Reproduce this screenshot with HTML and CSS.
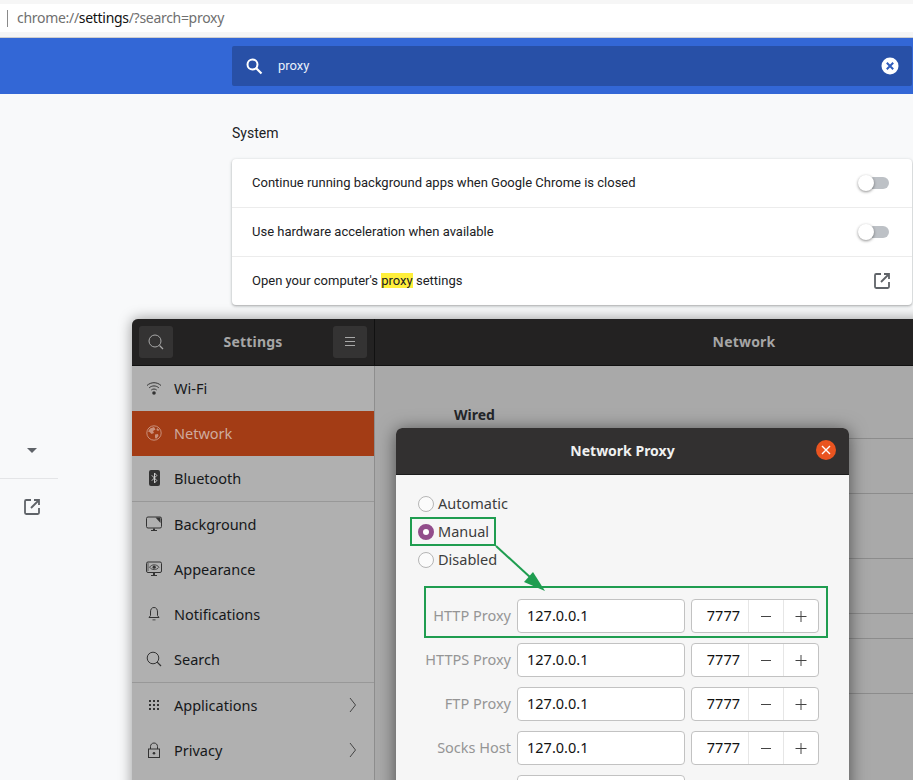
FILE: index.html
```html
<!DOCTYPE html>
<html lang="en">
<head>
<meta charset="utf-8">
<title>Proxy settings</title>
<link rel="stylesheet" href="styles.css">
</head>
<body>
<div class="browser">
  <div class="omnibox-wrap">
    <div class="omnibox"><span class="caret-line"></span><span class="url">chrome://<b>settings</b>/?search=proxy</span></div>
  </div>
  <header class="toolbar">
    <div class="searchbox">
      <svg class="search-ico" width="24" height="24" viewBox="0 0 24 24"><circle cx="10.5" cy="10.5" r="5" fill="none" stroke="#fff" stroke-width="2"/><path d="M14.2 14.2L19.5 19.5" stroke="#fff" stroke-width="2.2" fill="none"/></svg>
      <span class="query">proxy</span>
      <svg class="clear-ico" width="18" height="18" viewBox="0 0 18 18"><circle cx="9" cy="9" r="8.5" fill="#fff"/><path d="M5.8 5.8L12.2 12.2M12.2 5.8L5.8 12.2" stroke="#2f5cbc" stroke-width="2" fill="none"/></svg>
    </div>
  </header>
  <div class="page">
    <nav class="nav">
      <div class="nav-caret"><span class="tri"></span></div>
      <div class="nav-link">
        <svg width="18" height="18" viewBox="0 0 18 18"><path d="M8 2H3.2C2.5 2 2 2.5 2 3.2V14.800C2 15.500 2.500 16 3.200 16H14.800C15.500 16 16 15.500 16 14.800V10" fill="none" stroke="#5f6368" stroke-width="1.800"/><path d="M11 2H16V7M16 2L8 10" fill="none" stroke="#5f6368" stroke-width="1.800"/></svg>
      </div>
    </nav>
    <main class="main">
      <h2 class="section">System</h2>
      <section class="card">
        <div class="row"><span class="row-text">Continue running background apps when Google Chrome is closed</span><span class="toggle"></span></div>
        <div class="row"><span class="row-text">Use hardware acceleration when available</span><span class="toggle"></span></div>
        <div class="row"><span class="row-text">Open your computer's <mark>proxy</mark> settings</span>
          <svg class="ext" width="18" height="18" viewBox="0 0 18 18"><path d="M8 2H3.2C2.500 2 2 2.500 2 3.200V14.800C2 15.500 2.500 16 3.200 16H14.800C15.500 16 16 15.500 16 14.800V10" fill="none" stroke="#5f6368" stroke-width="1.800"/><path d="M11 2H16V7M16 2L8 10" fill="none" stroke="#5f6368" stroke-width="1.800"/></svg>
        </div>
      </section>
    </main>
  </div>
</div>

<div class="win">
  <div class="win-head">
    <div class="head-left">
      <button class="hbtn"><svg width="18" height="18" viewBox="0 0 18 18"><circle cx="8" cy="8" r="6" fill="none" stroke="#a8a8a8" stroke-width="1"/><path d="M12.500 12.500L16 16" stroke="#a8a8a8" stroke-width="1.200"/></svg></button>
      <span class="head-title">Settings</span>
      <button class="hbtn"><svg width="10" height="10" viewBox="0 0 10 10"><path d="M0 0.500H10M0 4.500H10M0 8.500H10" stroke="#a8a8a8" stroke-width="1"/></svg></button>
    </div>
    <div class="head-right"><span class="head-title">Network</span></div>
  </div>
  <div class="win-body">
    <ul class="side">
      <li class="item"><svg class="ic" width="16" height="16" viewBox="0 0 16 16"><path d="M1 5.500C5 1.800 11 1.800 15 5.500M3.200 7.800C6 5.300 10 5.300 12.800 7.800M5.300 10C6.900 8.700 9.100 8.700 10.700 10" fill="none" stroke="#333" stroke-width="1"/><circle cx="8" cy="13" r="1.800" fill="#333"/></svg>Wi-Fi</li>
      <li class="item active"><svg class="ic" width="16" height="16" viewBox="0 0 16 16"><circle cx="8" cy="8" r="7.200" fill="#a33c15" stroke="#c98f7a"/><path d="M4 3.500L8 2L9.500 4.500L7 6L8 8L5.500 9L3.500 7L2 6.500ZM9 9.500L12 9L12.500 11L10 14L9 12.500ZM11 3L13.500 5L12 6L10.500 5Z" fill="#c98f7a"/></svg>Network</li>
      <li class="item"><svg class="ic" width="16" height="16" viewBox="0 0 16 16"><rect x="3" y="0" width="11" height="16" rx="2" fill="#333"/><path d="M5.800 5.300L10.800 10.500L8.500 13V3L10.800 5.500L5.800 10.700" fill="none" stroke="#ccc" stroke-width="1"/></svg>Bluetooth</li>
      <li class="item sep"><svg class="ic" width="16" height="16" viewBox="0 0 16 16"><rect x="0.500" y="1" width="15" height="11" rx="1.500" fill="none" stroke="#333"/><path d="M9.500 1.500H14.500V7Z" fill="#333"/><path d="M5 15H11V14H9V12.500H7V14H5Z" fill="#333"/></svg>Background</li>
      <li class="item"><svg class="ic" width="16" height="16" viewBox="0 0 16 16"><rect x="0.500" y="1" width="15" height="10.500" rx="1.500" fill="none" stroke="#333"/><path d="M3.500 6.200C6 3 10.500 3 13 6.200C10.500 9.400 6 9.400 3.500 6.200Z" fill="none" stroke="#333" stroke-width=".8"/><circle cx="8.200" cy="6.200" r="1.600" fill="#333"/><path d="M1 3H3M1 5H3M1 7H3M1 9H3" stroke="#333" stroke-width=".7"/><path d="M5 15H11V14H9V12H7V14H5Z" fill="#333"/></svg>Appearance</li>
      <li class="item"><svg class="ic" width="16" height="16" viewBox="0 0 16 16"><path d="M8 1.500C5.500 1.500 4.500 3.500 4.500 6V9.500L3 11.500H13L11.500 9.500V6C11.500 3.500 10.500 1.500 8 1.500Z" fill="none" stroke="#333"/><path d="M6.500 13.500H9.500V14.300H6.500Z" fill="#333"/></svg>Notifications</li>
      <li class="item"><svg class="ic" width="16" height="16" viewBox="0 0 16 16"><circle cx="7" cy="7" r="5.800" fill="none" stroke="#333"/><path d="M11.200 11.200L15 15" stroke="#333" stroke-width="1.200"/></svg>Search</li>
      <li class="item sep"><svg class="ic" width="16" height="16" viewBox="0 0 16 16"><path d="M3 3h2v2h-2zM7 3h2v2h-2zM11 3h2v2h-2zM3 7h2v2h-2zM7 7h2v2h-2zM11 7h2v2h-2zM3 11h2v2h-2zM7 11h2v2h-2zM11 11h2v2h-2z" fill="#333"/></svg>Applications<svg class="chev" width="8" height="16" viewBox="0 0 8 16"><path d="M1 1L6.500 8L1 15" fill="none" stroke="#444"/></svg></li>
      <li class="item"><svg class="ic" width="16" height="16" viewBox="0 0 16 16"><path d="M4.500 7V4.500C4.500 2.500 6 1 8 1S11.500 2.500 11.500 4.500V7" fill="none" stroke="#333"/><rect x="2.500" y="7" width="11" height="8.500" fill="none" stroke="#333"/><circle cx="8" cy="11.200" r="1.300" fill="#333"/></svg>Privacy<svg class="chev" width="8" height="16" viewBox="0 0 8 16"><path d="M1 1L6.500 8L1 15" fill="none" stroke="#444"/></svg></li>
    </ul>
    <div class="content">
      <h3 class="wired">Wired</h3>
      <div class="lines">
        <div class="line h55"></div>
        <div class="line h65"></div>
        <div class="line h55"></div>
        <div class="line h25"></div>
        <div class="line h55"></div>
        <div class="line h55"></div>
      </div>
    </div>
  </div>
</div>

<div class="dialog">
  <div class="dlg-head">
    <span class="dlg-title">Network Proxy</span>
    <span class="dlg-close"><svg width="10" height="10" viewBox="0 0 10 10"><path d="M1 1L9 9M9 1L1 9" stroke="#fff" stroke-width="1.400"/></svg></span>
  </div>
  <div class="dlg-body">
    <div class="radios">
      <div class="radio"><span class="dot"></span><span class="radio-text">Automatic</span></div>
      <div class="radio"><span class="dot on"></span><span class="radio-text">Manual</span></div>
      <div class="radio"><span class="dot"></span><span class="radio-text">Disabled</span></div>
    </div>
    <div class="form">
      <div class="frow"><span class="lbl">HTTP Proxy</span><span class="entry">127.0.0.1</span><span class="spin"><span class="val">7777</span><span class="sbtn"><svg width="12" height="12" viewBox="0 0 12 12"><path d="M1 6.500H11" stroke="#444"/></svg></span><span class="sbtn"><svg width="12" height="12" viewBox="0 0 12 12"><path d="M0.500 6.500H11.500M6 1V12" stroke="#444"/></svg></span></span></div>
      <div class="frow"><span class="lbl">HTTPS Proxy</span><span class="entry">127.0.0.1</span><span class="spin"><span class="val">7777</span><span class="sbtn"><svg width="12" height="12" viewBox="0 0 12 12"><path d="M1 6.500H11" stroke="#444"/></svg></span><span class="sbtn"><svg width="12" height="12" viewBox="0 0 12 12"><path d="M0.500 6.500H11.500M6 1V12" stroke="#444"/></svg></span></span></div>
      <div class="frow"><span class="lbl">FTP Proxy</span><span class="entry">127.0.0.1</span><span class="spin"><span class="val">7777</span><span class="sbtn"><svg width="12" height="12" viewBox="0 0 12 12"><path d="M1 6.500H11" stroke="#444"/></svg></span><span class="sbtn"><svg width="12" height="12" viewBox="0 0 12 12"><path d="M0.500 6.500H11.500M6 1V12" stroke="#444"/></svg></span></span></div>
      <div class="frow"><span class="lbl">Socks Host</span><span class="entry">127.0.0.1</span><span class="spin"><span class="val">7777</span><span class="sbtn"><svg width="12" height="12" viewBox="0 0 12 12"><path d="M1 6.500H11" stroke="#444"/></svg></span><span class="sbtn"><svg width="12" height="12" viewBox="0 0 12 12"><path d="M0.500 6.500H11.500M6 1V12" stroke="#444"/></svg></span></span></div>
      <div class="frow"><span class="lbl"></span><span class="entry"></span></div>
    </div>
  </div>
</div>

<div class="mark-box mark-manual"></div>
<div class="mark-box mark-http"></div>
<svg class="mark-arrow" width="60" height="56" viewBox="0 0 60 56"><path d="M1 1L36 33" stroke="#1f9d50" stroke-width="2" fill="none"/><path d="M50 46L29 37L38 27Z" fill="#1f9d50"/></svg>
</body>
</html>
```
FILE: styles.css
```css
* { box-sizing: border-box; }
html, body { margin: 0; height: 780px; overflow: hidden; }
body { position: relative; background: #f8f9fa; font-family: "Roboto", sans-serif; }

.browser { display: flex; flex-direction: column; height: 780px; }
.omnibox-wrap { height: 38px; padding: 4px 0 5px; background: #f6f6f6; border-bottom: 1px solid #cfcfcf; }
.omnibox { height: 28px; background: #fff; display: flex; align-items: center; padding-left: 7px; }
.caret-line { width: 1px; height: 17px; background: #8a8a8a; margin-right: 9px; }
.url { margin-top: -2px; font: 14px "Noto Sans", sans-serif; color: #6f6f6f; letter-spacing: -0.3px; }
.url b { font-weight: 400; color: #111; }

.toolbar { height: 56px; background: #3367d6; padding: 8px 1px 8px 232px; }
.searchbox { height: 40px; background: #2850a7; border-radius: 2px; display: flex; align-items: center; padding: 0 13px 0 10px; }
.query { flex: 1; margin: -2px 0 0 12px; color: #e8effa; font-size: 13px; }

.page { flex: 1; display: flex; }
.nav { width: 232px; padding-top: 343px; flex: none; }
.nav-caret { width: 58px; height: 42px; border-bottom: 1px solid #e4e5e7; padding: 11px 0 0 27px; }
.tri { display: block; width: 0; height: 0; border: 5px solid transparent; border-top-color: #5f6368; border-bottom: 0; }
.nav-link { padding: 19px 0 0 23px; }
.main { flex: 1; padding-right: 1px; }
.section { margin: 0; padding-top: 30px; height: 65px; font-size: 14px; font-weight: 400; line-height: 18px; color: #202124; }
.card { background: #fff; border-radius: 4px; box-shadow: 0 1px 2px rgba(60,64,67,.3), 0 1px 3px 1px rgba(60,64,67,.12); }
.row { height: 49px; display: flex; align-items: center; justify-content: space-between; padding: 0 21px 0 20px; font-size: 13px; color: #202124; border-top: 1px solid #ececec; }
.row:first-child { border-top: 0; height: 48px; }
.row-text { margin-top: -2px; }
mark { background: #ffef3b; color: inherit; }
.toggle { position: relative; width: 29px; height: 12px; margin-right: 2px; background: #bdc1c6; border-radius: 6px; }
.toggle::before { content: ""; position: absolute; left: -2px; top: -2px; width: 16px; height: 16px; border-radius: 50%; background: #fff; box-shadow: 0 1px 3px rgba(0,0,0,.45); }

.win { position: absolute; left: 132px; top: 319px; width: 800px; height: 480px; border-radius: 6px 6px 0 0; background: #aaa; box-shadow: 0 0 14px rgba(0,0,0,.4); font-family: "Noto Sans", sans-serif; overflow: hidden; }
.win-head { height: 47px; display: flex; background: #232222; border-bottom: 1px solid #111; }
.head-left { width: 243px; flex: none; display: flex; align-items: center; justify-content: space-between; padding: 0 7px; border-right: 1px solid #111; }
.head-right { flex: 1; padding-left: 181px; display: flex; align-items: center; justify-content: center; }
.head-title { margin-top: -2px; font-size: 14px; font-weight: 700; color: #a6a6a6; letter-spacing: 0.2px; }
.hbtn { width: 34px; height: 32px; padding: 0; border: 0; border-radius: 3px; background: #343333; display: flex; align-items: center; justify-content: center; }
.win-body { display: flex; height: 433px; }
.side { width: 243px; flex: none; margin: 0; padding: 0; list-style: none; background: #b0b0b0; border-right: 1px solid #8e8e8e; }
.item { height: 45px; display: flex; align-items: center; padding: 0 0 2px 14px; font-size: 14.500px; color: #16181a; position: relative; }
.item.sep { height: 46px; border-top: 1px solid #989898; }
.item.active { background: #a33c15; color: #ceab9e; }
.ic { margin-right: 12px; flex: none; }
.chev { position: absolute; right: 17px; top: 14px; }
.content { flex: 1; padding: 39px 0 0 79px; background: #a9a9a9; }
.wired { margin: 0; height: 33px; font-size: 14px; font-weight: 700; line-height: 19px; color: #24262a; }
.line { border-top: 1px solid #8c8c8c; }
.h55 { height: 55px; }
.h65 { height: 65px; }
.h25 { height: 25px; }

.dialog { position: absolute; left: 396px; top: 428px; width: 453px; height: 380px; border-radius: 6px 6px 0 0; background: #f6f6f6; box-shadow: 0 2px 18px rgba(0,0,0,.55); font-family: "Noto Sans", sans-serif; overflow: hidden; }
.dlg-head { height: 47px; position: relative; display: flex; align-items: center; justify-content: center; background: #323030; border-bottom: 1px solid #1c1c1c; }
.dlg-title { margin-top: -2px; font-size: 14px; font-weight: 700; color: #f0f0f0; }
.dlg-close { position: absolute; right: 13px; top: 12px; width: 20px; height: 20px; border-radius: 50%; background: #e95420; display: flex; align-items: center; justify-content: center; }
.dlg-body { padding: 15px 0 0 22px; }
.radios { display: flex; flex-direction: column; gap: 0; }
.radio { height: 28px; display: flex; align-items: center; gap: 4px; font-size: 14.500px; color: #3d3d3d; }
.radio-text { margin-top: -2px; }
.dot { width: 16px; height: 16px; border-radius: 50%; background: #fbfbfb; border: 1px solid #b5b5b5; }
.dot.on { background: #924d8b; border: 5px solid #924d8b; position: relative; }
.dot.on::after { content: ""; position: absolute; inset: 0; border-radius: 50%; background: #fff; }
.form { margin-top: 25px; margin-left: -22px; display: flex; flex-direction: column; gap: 10px; }
.frow { display: flex; align-items: stretch; height: 34px; }
.lbl { width: 115px; flex: none; text-align: right; font-size: 14.500px; line-height: 33px; color: #959595; white-space: nowrap; }
.entry { width: 168px; margin-left: 6px; flex: none; background: #fff; border: 1px solid #c2c2c2; border-radius: 4px; padding-left: 9px; font-size: 14.500px; line-height: 30px; color: #111; }
.spin { width: 128px; margin-left: 6px; flex: none; display: flex; background: #fff; border: 1px solid #c2c2c2; border-radius: 4px; }
.val { width: 56px; text-align: right; padding-right: 8px; font-size: 14.500px; line-height: 30px; color: #111; }
.sbtn { width: 35px; border-left: 1px solid #e6e6e6; display: flex; align-items: center; justify-content: center; }

.mark-box { position: absolute; border: 2px solid #1f9d50; }
.mark-manual { left: 410px; top: 517px; width: 86px; height: 29px; }
.mark-http { left: 424px; top: 586px; width: 404px; height: 52px; }
.mark-arrow { position: absolute; left: 495px; top: 545px; }
```
